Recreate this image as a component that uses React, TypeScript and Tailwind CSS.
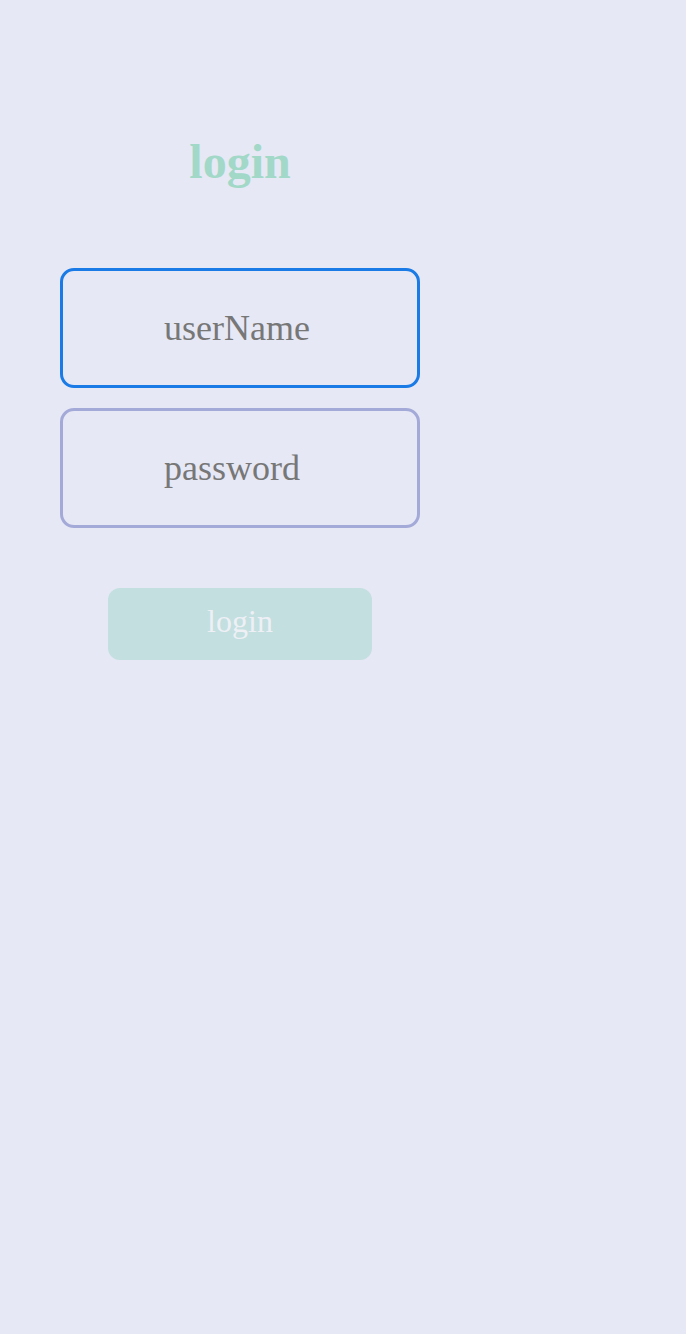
export default function App() {
  return (
    <div
      className="min-h-screen w-full bg-[#e6e8f5]"
      style={{ fontFamily: '"Liberation Serif", "Times New Roman", serif' }}
    >
      <div className="w-[480px] flex flex-col items-center pt-[138px]">
        <h1 className="text-[48px] leading-[48px] font-bold text-[#a2d8c7]">login</h1>
        <div className="mt-[82px] w-[360px] h-[120px] border-[3px] border-[#1a7be6] rounded-[14px] flex items-center pl-[101px]">
          <span className="text-[36px] leading-[36px] text-[#777777]">userName</span>
        </div>
        <div className="mt-[20px] w-[360px] h-[120px] border-[3px] border-[#a4aad8] rounded-[14px] flex items-center pl-[101px]">
          <span className="text-[36px] leading-[36px] text-[#777777]">password</span>
        </div>
        <button className="mt-[60px] w-[264px] h-[72px] rounded-[12px] bg-[#c3dfdf] flex items-center justify-center pb-[6px]">
          <span className="text-[32px] leading-[32px] text-[#eef0f6]">login</span>
        </button>
      </div>
    </div>
  );
}
